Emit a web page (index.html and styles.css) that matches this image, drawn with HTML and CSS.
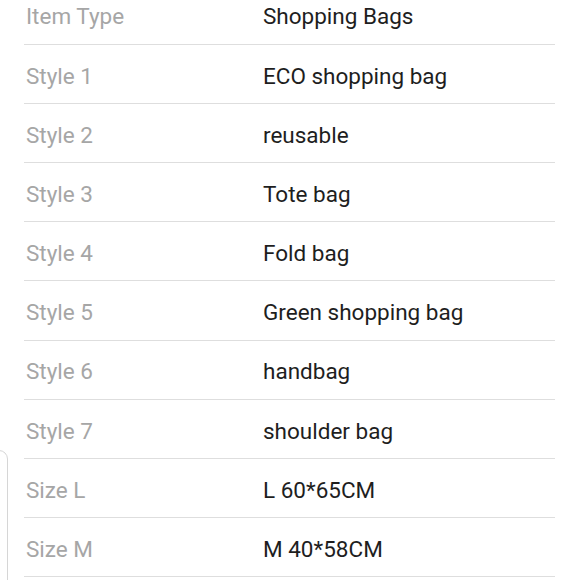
FILE: index.html
```html
<!DOCTYPE html>
<html>
<head>
<meta charset="utf-8">
<link rel="stylesheet" href="styles.css">
</head>
<body>
<div class="page">
  <div class="side-card"></div>
  <div class="specs">
    <div class="row"><div class="label">Item Type</div><div class="value">Shopping Bags</div></div>
    <div class="row"><div class="label">Style 1</div><div class="value">ECO shopping bag</div></div>
    <div class="row"><div class="label">Style 2</div><div class="value">reusable</div></div>
    <div class="row"><div class="label">Style 3</div><div class="value">Tote bag</div></div>
    <div class="row"><div class="label">Style 4</div><div class="value">Fold bag</div></div>
    <div class="row"><div class="label">Style 5</div><div class="value">Green shopping bag</div></div>
    <div class="row"><div class="label">Style 6</div><div class="value">handbag</div></div>
    <div class="row"><div class="label">Style 7</div><div class="value">shoulder bag</div></div>
    <div class="row"><div class="label">Size L</div><div class="value">L 60*65CM</div></div>
    <div class="row"><div class="label">Size M</div><div class="value">M 40*58CM</div></div>
  </div>
</div>
</body>
</html>
```
FILE: styles.css
```css
html, body {
  margin: 0;
  padding: 0;
  background: #ffffff;
}
body {
  font-family: Roboto, "Noto Sans", sans-serif;
  width: 580px;
  height: 580px;
  overflow: hidden;
}
.page {
  position: relative;
  width: 580px;
  height: 580px;
  overflow: hidden;
}
.side-card {
  position: absolute;
  left: -40px;
  top: 450px;
  width: 46px;
  height: 200px;
  border: 1.5px solid #d6d6d6;
  border-radius: 9px;
}
.specs {
  margin-top: -14.5px;
  margin-left: 24px;
  width: 531px;
}
.row {
  display: flex;
  align-items: center;
  height: 54.7px;
  padding-top: 3.5px;
  border-bottom: 1px solid #dedede;
  font-size: 22.5px;
  box-sizing: content-box;
}
.label {
  width: 237px;
  padding-left: 2px;
  color: #a6a6a6;
}
.value {
  color: #1e1e1e;
}
```
